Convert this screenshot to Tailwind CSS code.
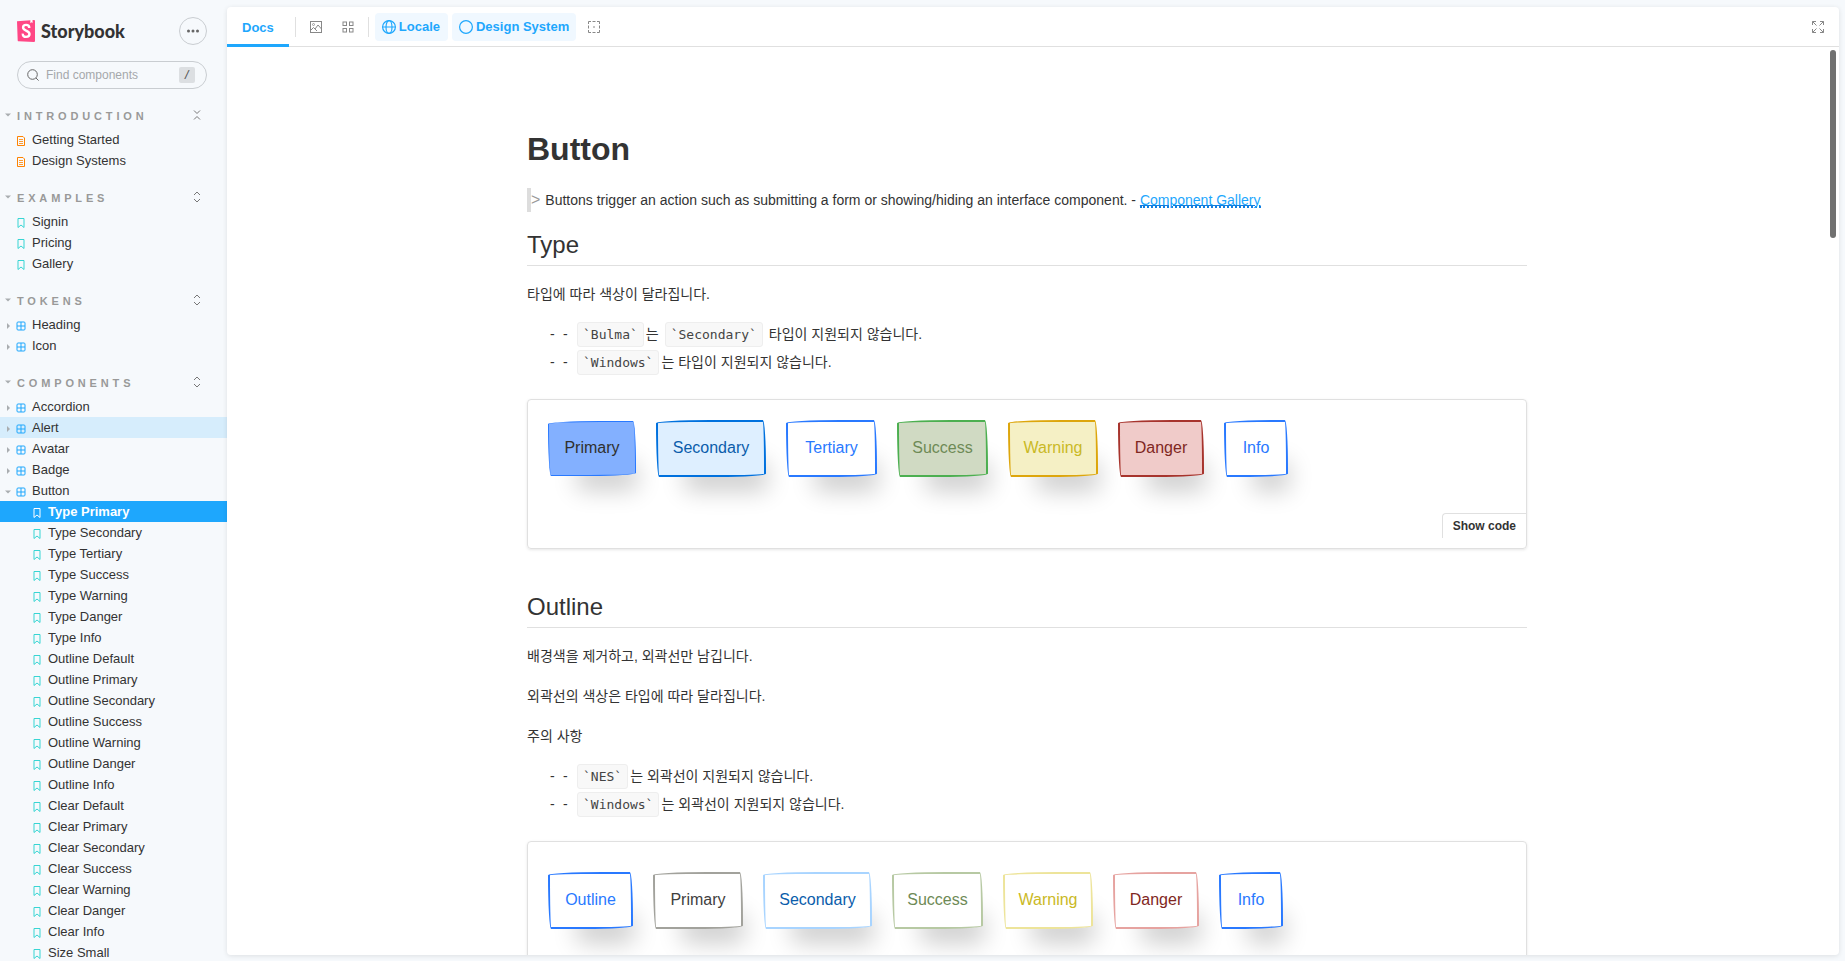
<!DOCTYPE html>
<html lang="ko">
<head>
  <meta charset="UTF-8" />
  <meta name="viewport" content="width=device-width, initial-scale=1.0"/>
  <title>Button - Docs ⋅ Storybook</title>
  <script src="https://cdn.jsdelivr.net/npm/@tailwindcss/browser@4"></script>
  <style>
    /* hand drawn look of the paper theme */
    .paper {
      border-top-left-radius: 255px 15px;
      border-top-right-radius: 15px 225px;
      border-bottom-right-radius: 225px 15px;
      border-bottom-left-radius: 15px 255px;
    }
  </style>
</head>
<body class="h-screen flex overflow-hidden bg-[#f6f9fc] text-[#333] font-['Liberation_Sans','Noto_Sans_CJK_KR',sans-serif]">

  <!-- icons -->
  <svg class="hidden">
    <symbol id="i-document" viewBox="0 0 10 12">
      <path d="M1.500 1.500h5.500l1.500 1.500v7.500h-7z" fill="none" stroke="#ff8300" stroke-width="1"/>
      <path d="M3 4.500h4M3 6.500h4M3 8.500h4" stroke="#ff8300" stroke-width=".8"/>
    </symbol>
    <symbol id="i-bookmark" viewBox="0 0 10 12">
      <path d="M2 1.500h6v9L5 8l-3 2.500z" fill="none" stroke="currentColor" stroke-width="1"/>
    </symbol>
    <symbol id="i-component" viewBox="0 0 10 12">
      <rect x="1" y="2" width="8" height="8" rx="1" fill="none" stroke="#1ea7fd"/>
      <path d="M5 2v8M1 6h8" stroke="#1ea7fd"/>
    </symbol>
    <symbol id="i-expand" viewBox="0 0 8 12">
      <path d="M1 4l3-3 3 3M1 8l3 3 3-3" fill="none" stroke="#777" stroke-width="1"/>
    </symbol>
    <symbol id="i-collapse" viewBox="0 0 8 12">
      <path d="M1 1.500l3 3 3-3M1 10.500l3-3 3 3" fill="none" stroke="#777" stroke-width="1"/>
    </symbol>
    <symbol id="i-down" viewBox="0 0 6 6"><path d="M0 1.500h6l-3 3z" fill="#a9adb0"/></symbol>
    <symbol id="i-right" viewBox="0 0 6 6"><path d="M2 0v6l3-3z" fill="#a9adb0"/></symbol>
  </svg>

  <!-- Sidebar -->
  <aside class="w-[227px] shrink-0 overflow-hidden">
    <div class="flex items-center justify-between pt-[17px] pl-[17px] pr-5">
      <a href="#" class="flex items-center gap-[6px]">
        <svg class="w-[18px] h-[22px]" viewBox="0 0 18 22">
          <path d="M0 1.300L17 .1q1-.1 1 .9v20q0 1-1 1L1.600 21.300q-.8 0-.9-.9z" fill="#ff4785"/>
          <path d="M13.400 0l2.100-.1.100 3.100-1.100-.8-1.200 1z" fill="#fff"/>
          <path d="M12.300 8q0-3.100-3.200-3.100-3 0-3 2.500 0 1.700 3 3.200 3.400 1.600 3.400 3.500 0 2.800-3.400 2.800-3.500 0-3.300-3.300" fill="none" stroke="#fff" stroke-width="2.400"/>
        </svg>
        <span class="font-['Lato',sans-serif] font-black text-lg leading-6">Storybook</span>
      </a>
      <button aria-label="Shortcuts" class="size-7 rounded-full border border-[#c9cdd1] flex items-center justify-center">
        <svg class="w-3 h-1" viewBox="0 0 12 4" fill="#666"><circle cx="1.500" cy="2" r="1.500"/><circle cx="6" cy="2" r="1.500"/><circle cx="10.500" cy="2" r="1.500"/></svg>
      </button>
    </div>
    <label class="mt-4 ml-[17px] mr-5 h-7 rounded-full border border-[#c9cdd1] flex items-center pl-[9px] pr-[11px]">
      <svg class="size-3 shrink-0" viewBox="0 0 12 12" fill="none" stroke="#666"><circle cx="5.500" cy="5.500" r="4.800"/><path d="M9 9l2.600 2.600"/></svg>
      <input type="text" placeholder="Find components" aria-label="Find components" class="min-w-0 flex-1 ml-[7px] text-xs outline-none placeholder:text-[#a5a8ab]"/>
      <kbd class="w-4 h-4 rounded-[2px] bg-[#dcdfe2] text-[#555] text-[11px] leading-4 text-center font-['DejaVu_Sans_Mono',monospace]">/</kbd>
    </label>
    <nav id="tree"></nav>
  </aside>

  <!-- Preview -->
  <main class="flex-1 min-w-0 mt-[7px] mr-[6px] mb-[6px] flex flex-col bg-white rounded-[4px] overflow-hidden shadow-[0_1px_5px_rgba(0,0,0,0.1)]">
    <div class="h-10 shrink-0 border-b border-[#e0e0e0] flex items-center text-[13px] font-bold text-[#1ea7fd]">
      <button class="h-10 px-[15px] pt-[5px] border-b-3 border-[#1ea7fd]">Docs</button>
      <span class="w-px h-5 ml-[6px] bg-[#e0e0e0]"></span>
      <button aria-label="Background" class="size-7 ml-[6px] flex items-center justify-center">
        <svg class="size-[14px]" viewBox="0 0 14 14" fill="none" stroke="#888"><rect x="1.500" y="1.500" width="11" height="11"/><circle cx="4.500" cy="4.500" r="1" stroke-width=".8"/><path d="M2 10l2.500-2.500L6 9l3-4 3.500 4M6 9l2 2"/></svg>
      </button>
      <button aria-label="Grid" class="size-7 ml-1 flex items-center justify-center">
        <svg class="size-[14px]" viewBox="0 0 14 14" fill="none" stroke="#888"><rect x="2" y="2" width="3.500" height="3.500"/><rect x="8.500" y="2" width="3.500" height="3.500"/><rect x="2" y="8.500" width="3.500" height="3.500"/><rect x="8.500" y="8.500" width="3.500" height="3.500"/></svg>
      </button>
      <span class="w-px h-5 ml-[6px] bg-[#e0e0e0]"></span>
      <button class="h-7 ml-[6px] pl-[7px] pr-2 pt-px rounded-[4px] bg-[#f0f8ff] flex items-center gap-[3px]">
        <svg class="size-[14px]" viewBox="0 0 14 14" fill="none" stroke="#1ea7fd" stroke-width="1.200"><circle cx="7" cy="7" r="6.400"/><ellipse cx="7" cy="7" rx="3" ry="6.400"/><path d="M.6 7h12.800"/></svg>
        Locale
      </button>
      <button class="h-7 ml-1 px-[7px] pt-px rounded-[4px] bg-[#f0f8ff] flex items-center gap-[3px]">
        <svg class="size-[14px]" viewBox="0 0 14 14" fill="none" stroke="#1ea7fd" stroke-width="1.200"><circle cx="7" cy="7" r="6.400"/></svg>
        Design System
      </button>
      <button aria-label="Outline" class="size-7 ml-1 flex items-center justify-center">
        <svg class="size-[14px]" viewBox="0 0 14 14" fill="none" stroke="#888"><path d="M1.500 4V1.500H4M10 1.500h2.500V4M12.500 10v2.500H10M4 12.500H1.500V10M5.500 1.500h3M5.500 12.500h3M1.500 5.500v3M12.500 5.500v3M6 7h2"/></svg>
      </button>
      <button aria-label="Full screen" class="size-7 ml-auto mr-[7px] flex items-center justify-center">
        <svg class="size-[14px]" viewBox="0 0 14 14" fill="none" stroke="#888"><path d="M5 1.500H1.500V5M9 1.500h3.500V5M12.500 9v3.500H9M5 12.500H1.500V9M1.500 1.500L5.500 5.500M12.500 1.500l-4 4M12.500 12.500l-4-4M1.500 12.500l4-4"/></svg>
      </button>
    </div>

    <div class="flex-1 min-h-0 flex">
      <div class="flex-1 min-w-0 overflow-hidden px-5 pt-[84px]">
        <article class="max-w-[1000px] mx-auto text-sm leading-6">
          <h1 class="text-[32px] leading-9 font-bold">Button</h1>
          <blockquote class="mt-[21px] border-l-4 border-[#ddd] flex items-center gap-[5px]">
            <span class="text-base leading-6 text-[#999]">&gt;</span>
            <p>Buttons trigger an action such as submitting a form or showing/hiding an interface component. - <a href="#" class="inline-block leading-[12px] text-[#1ea7fd] underline underline-offset-0 decoration-[#117fe0] border-b-2 border-dotted border-[#117fe0]">Component Gallery</a></p>
          </blockquote>

          <h2 class="mt-[21px] pb-2 border-b border-[#e0e0e0] text-2xl leading-6">Type</h2>
          <p class="mt-4">타입에 따라 색상이 달라집니다.</p>
          <ul class="mt-[14px] pl-[23px]">
            <li class="h-7 flex items-center"><span class="w-[13px]">-</span><span class="w-3">-</span><code class="code">`Bulma`</code><span class="mr-1">는</span><code class="code">`Secondary`</code><span class="ml-1">타입이 지원되지 않습니다.</span></li>
            <li class="h-7 flex items-center"><span class="w-[13px]">-</span><span class="w-3">-</span><code class="code">`Windows`</code><span>는 타입이 지원되지 않습니다.</span></li>
          </ul>
          <section class="mt-[23px] border border-[#e0e0e0] rounded-[4px] shadow-[0_1px_3px_rgba(0,0,0,0.1)]">
            <div id="types" class="flex flex-wrap items-center gap-5 p-5 pb-9"></div>
            <div class="flex justify-end pb-[10px]">
              <button class="h-[25px] px-[10px] border-t border-l border-[#e0e0e0] rounded-tl-[4px] text-xs font-bold">Show code</button>
            </div>
          </section>

          <h2 class="mt-[46px] pb-2 border-b border-[#e0e0e0] text-2xl leading-6">Outline</h2>
          <p class="mt-4">배경색을 제거하고, 외곽선만 남깁니다.</p>
          <p class="mt-4">외곽선의 색상은 타입에 따라 달라집니다.</p>
          <p class="mt-4">주의 사항</p>
          <ul class="mt-[14px] pl-[23px]">
            <li class="h-7 flex items-center"><span class="w-[13px]">-</span><span class="w-3">-</span><code class="code">`NES`</code><span>는 외곽선이 지원되지 않습니다.</span></li>
            <li class="h-7 flex items-center"><span class="w-[13px]">-</span><span class="w-3">-</span><code class="code">`Windows`</code><span>는 외곽선이 지원되지 않습니다.</span></li>
          </ul>
          <section class="mt-[23px] border border-[#e0e0e0] rounded-[4px] shadow-[0_1px_3px_rgba(0,0,0,0.1)]">
            <div id="outlines" class="flex flex-wrap items-center gap-5 px-5 py-[30px]"></div>
          </section>
        </article>
      </div>
      <!-- scrollbar -->
      <div class="w-3 shrink-0 flex justify-center pt-[3px]">
        <div class="w-[6px] h-[188px] rounded-full bg-[#707070]"></div>
      </div>
    </div>
  </main>

  <script>
    const $ = id => document.getElementById(id);

    const stories = [
      "Type Primary", "Type Secondary", "Type Tertiary", "Type Success", "Type Warning", "Type Danger", "Type Info",
      "Outline Default", "Outline Primary", "Outline Secondary", "Outline Success", "Outline Warning", "Outline Danger", "Outline Info",
      "Clear Default", "Clear Primary", "Clear Secondary", "Clear Success", "Clear Warning", "Clear Danger", "Clear Info",
      "Size Small",
    ];

    const groups = [
      { title: "INTRODUCTION", icon: "document", open: true, items: ["Getting Started", "Design Systems"] },
      { title: "EXAMPLES", icon: "bookmark", items: ["Signin", "Pricing", "Gallery"] },
      { title: "TOKENS", icon: "component", items: ["Heading", "Icon"] },
      { title: "COMPONENTS", icon: "component", items: ["Accordion", "Alert", "Avatar", "Badge", "Button"] },
    ];

    const icon = (name, cls) => `<svg class="${cls}"><use href="#i-${name}"/></svg>`;

    const row = (name, type) => {
      const arrow = type === "component" ? icon(name === "Button" ? "down" : "right", "size-[6px] shrink-0 mt-[3px]") : `<span class="w-[6px]"></span>`;
      return `<a href="#" class="h-[21px] flex items-center pl-[5px] text-[13px] leading-5 ${name === "Alert" ? "bg-[#d6edfc]" : ""}">
        ${arrow}${icon(type, "w-[10px] h-3 shrink-0 ml-[5px] mr-[6px] mt-[3px] text-[#37d5d3]")}${name}</a>`;
    };

    const story = name => {
      const on = name === "Type Primary";
      return `<a href="#" class="h-[21px] flex items-center pl-8 text-[13px] leading-5 ${on ? "bg-[#1ea7fd] text-white font-bold" : ""}">
        ${icon("bookmark", on ? "w-[10px] h-3 shrink-0 mr-[6px] mt-[3px] text-white" : "w-[10px] h-3 shrink-0 mr-[6px] mt-[3px] text-[#37d5d3]")}${name}</a>`;
    };

    $("tree").innerHTML = groups.map(g => `
      <div class="mt-4 mb-[2px] h-[22px] flex items-center pl-[5px] pr-[26px]">
        <button class="flex items-center gap-[6px] text-[11px] font-bold tracking-[0.35em] text-[#999]">${icon("down", "size-[6px] mb-[3px]")}${g.title}</button>
        <button aria-label="Toggle ${g.title}" class="ml-auto">${icon(g.open ? "collapse" : "expand", "w-2 h-3 mb-[2px]")}</button>
      </div>
      ${g.items.map(name => row(name, g.icon)).join("")}
    `).join("") + stories.map(story).join("");

    const types = [
      ["Primary", "w-[88px] h-[55px] border bg-[#83b0ff] border-[#2979ff] text-[#30302e]"],
      ["Secondary", "w-[110px] h-[57px] border-2 bg-[#deefff] border-[#0071de] text-[#0b5dab]"],
      ["Tertiary", "w-[91px] h-[57px] border-2 bg-white border-[#2979ff] text-[#2979ff]"],
      ["Success", "w-[91px] h-[57px] border-2 bg-[#d0dac3] border-[#4caf50] text-[#6e8a56]"],
      ["Warning", "w-[90px] h-[57px] border-2 bg-[#f5f0c5] border-[#dda60c] text-[#cab925]"],
      ["Danger", "w-[86px] h-[57px] border-2 bg-[#f0cbc9] border-[#a7342d] text-[#7f2722]"],
      ["Info", "w-[64px] h-[57px] border-2 bg-white border-[#2979ff] text-[#2979ff]"],
    ];

    const outlines = [
      ["Outline", "w-[85px] h-[57px] border-2 bg-white border-[#2979ff] text-[#2979ff]"],
      ["Primary", "w-[90px] h-[57px] border-2 bg-white border-[#a2a29c] text-[#41403e]"],
      ["Secondary", "w-[109px] h-[57px] border-2 bg-white border-[#a8d4ff] text-[#0b5dab]"],
      ["Success", "w-[91px] h-[57px] border-2 bg-white border-[#b7c9a3] text-[#6e8a56]"],
      ["Warning", "w-[90px] h-[57px] border-2 bg-white border-[#ede49a] text-[#cab925]"],
      ["Danger", "w-[86px] h-[57px] border-2 bg-white border-[#e6a3a0] text-[#7f2722]"],
      ["Info", "w-[64px] h-[57px] border-2 bg-white border-[#2979ff] text-[#2979ff]"],
    ];

    const button = ([label, cls]) =>
      `<button class="paper ${cls} pb-[2px] text-base shadow-[15px_28px_25px_-14px_rgba(0,0,0,0.2)]">${label}</button>`;

    $("types").innerHTML = types.map(button).join("");
    $("outlines").innerHTML = outlines.map(button).join("");

    document.querySelectorAll(".code").forEach(el => {
      el.className = "mx-[2px] px-[5px] h-[25px] rounded-[3px] border border-[#eee] bg-[#f8f8f8] text-[13px] leading-[24px] text-[#444] font-['DejaVu_Sans_Mono',monospace]";
    });
  </script>
</body>
</html>
